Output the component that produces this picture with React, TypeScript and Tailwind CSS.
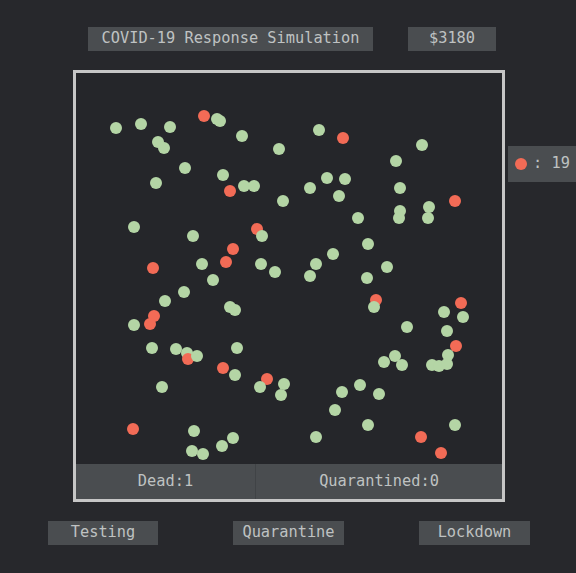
import type { ReactElement } from "react";

// [x, y, infected] — centre of each person, in page pixels
const people: [number, number, boolean][] = [
  [116, 128, false], [141, 124, false], [170, 127, false], [204, 116, true],
  [217, 119, false], [220, 121, false], [158, 142, false], [164, 148, false],
  [242, 136, false], [279, 149, false], [185, 168, false], [223, 175, false],
  [156, 183, false], [230, 191, true], [244, 186, false], [254, 186, false],
  [283, 201, false], [134, 227, false], [193, 236, false], [257, 229, true],
  [262, 236, false], [233, 249, true], [226, 262, true], [202, 264, false],
  [261, 264, false], [153, 268, true], [275, 272, false], [213, 280, false],
  [184, 292, false], [165, 301, false], [230, 307, false], [235, 310, false],
  [154, 316, true], [150, 324, true], [134, 325, false], [152, 348, false],
  [176, 349, false], [187, 353, false], [188, 359, true], [197, 356, false],
  [237, 348, false], [223, 368, true], [235, 375, false], [267, 379, true],
  [260, 387, false], [284, 384, false], [281, 395, false], [162, 387, false],
  [133, 429, true], [194, 431, false], [233, 438, false], [222, 446, false],
  [192, 451, false], [203, 454, false],
  [319, 130, false], [343, 138, true], [422, 145, false], [396, 161, false],
  [327, 178, false], [345, 179, false], [310, 188, false], [339, 196, false],
  [400, 188, false], [455, 201, true], [358, 218, false], [400, 211, false],
  [399, 218, false], [429, 207, false], [428, 218, false], [368, 244, false],
  [333, 254, false], [316, 264, false], [387, 267, false], [310, 276, false],
  [367, 278, false], [376, 300, true], [374, 307, false], [461, 303, true],
  [444, 312, false], [463, 317, false], [407, 327, false], [447, 331, false],
  [456, 346, true], [448, 355, false], [395, 356, false], [402, 365, false],
  [384, 362, false], [432, 365, false], [439, 366, false], [447, 364, false],
  [360, 385, false], [342, 392, false], [379, 394, false], [335, 410, false],
  [368, 425, false], [455, 425, false], [316, 437, false], [421, 437, true],
  [441, 453, true],
];

const panel =
  "flex h-[24px] items-center justify-center bg-[#4a4d50] text-[#bfc2c2]";

export default function App(): ReactElement {
  const infected = people.filter((p) => p[2]).length;

  return (
    <div
      className="h-[573px] w-[576px] overflow-hidden bg-[#27282c] text-[15.3px] leading-none"
      style={{ fontFamily: '"DejaVu Sans Mono", "Liberation Mono", monospace' }}
    >
      <div className="flex pl-[88px] pt-[27px]">
        <div className={`${panel} w-[285px] shrink-0`}>COVID-19 Response Simulation</div>
        <div className={`${panel} ml-[35px] w-[88px] shrink-0`}>$3180</div>
      </div>

      <div className="mt-[19px] flex items-start pl-[73px]">
        <div className="flex h-[432px] w-[432px] shrink-0 flex-col border-[3px] border-[#c6c6c6] bg-[#25262a]">
          <div className="relative flex-1">
            {people.map(([x, y, sick], i) => (
              <span
                key={i}
                className={`absolute h-[12px] w-[12px] rounded-full ${
                  sick ? "bg-[#f26b56]" : "bg-[#b4d5a5]"
                }`}
                style={{ left: x - 76 - 6, top: y - 73 - 6 }}
              />
            ))}
          </div>
          <div className="flex h-[35px] bg-[#4a4d50] text-[#bfc2c2]">
            <div className="flex w-[180px] items-center justify-center border-r border-[#404346]">
              Dead:1
            </div>
            <div className="flex flex-1 items-center justify-center">
              Quarantined:0
            </div>
          </div>
        </div>

        <div className="ml-[3px] mt-[76px] flex h-[36px] w-[80px] shrink-0 items-center bg-[#4a4d50] pl-[7px] text-[#bfc2c2]">
          <span className="h-[12px] w-[12px] rounded-full bg-[#f26b56]" />
          <span className="ml-[6px] whitespace-pre">: {infected}</span>
        </div>
      </div>

      <div className="mt-[19px] flex">
        <button className={`${panel} ml-[48px] w-[110px] shrink-0`}>Testing</button>
        <button className={`${panel} ml-[75px] w-[111px] shrink-0`}>Quarantine</button>
        <button className={`${panel} ml-[75px] w-[111px] shrink-0`}>Lockdown</button>
      </div>
    </div>
  );
}
